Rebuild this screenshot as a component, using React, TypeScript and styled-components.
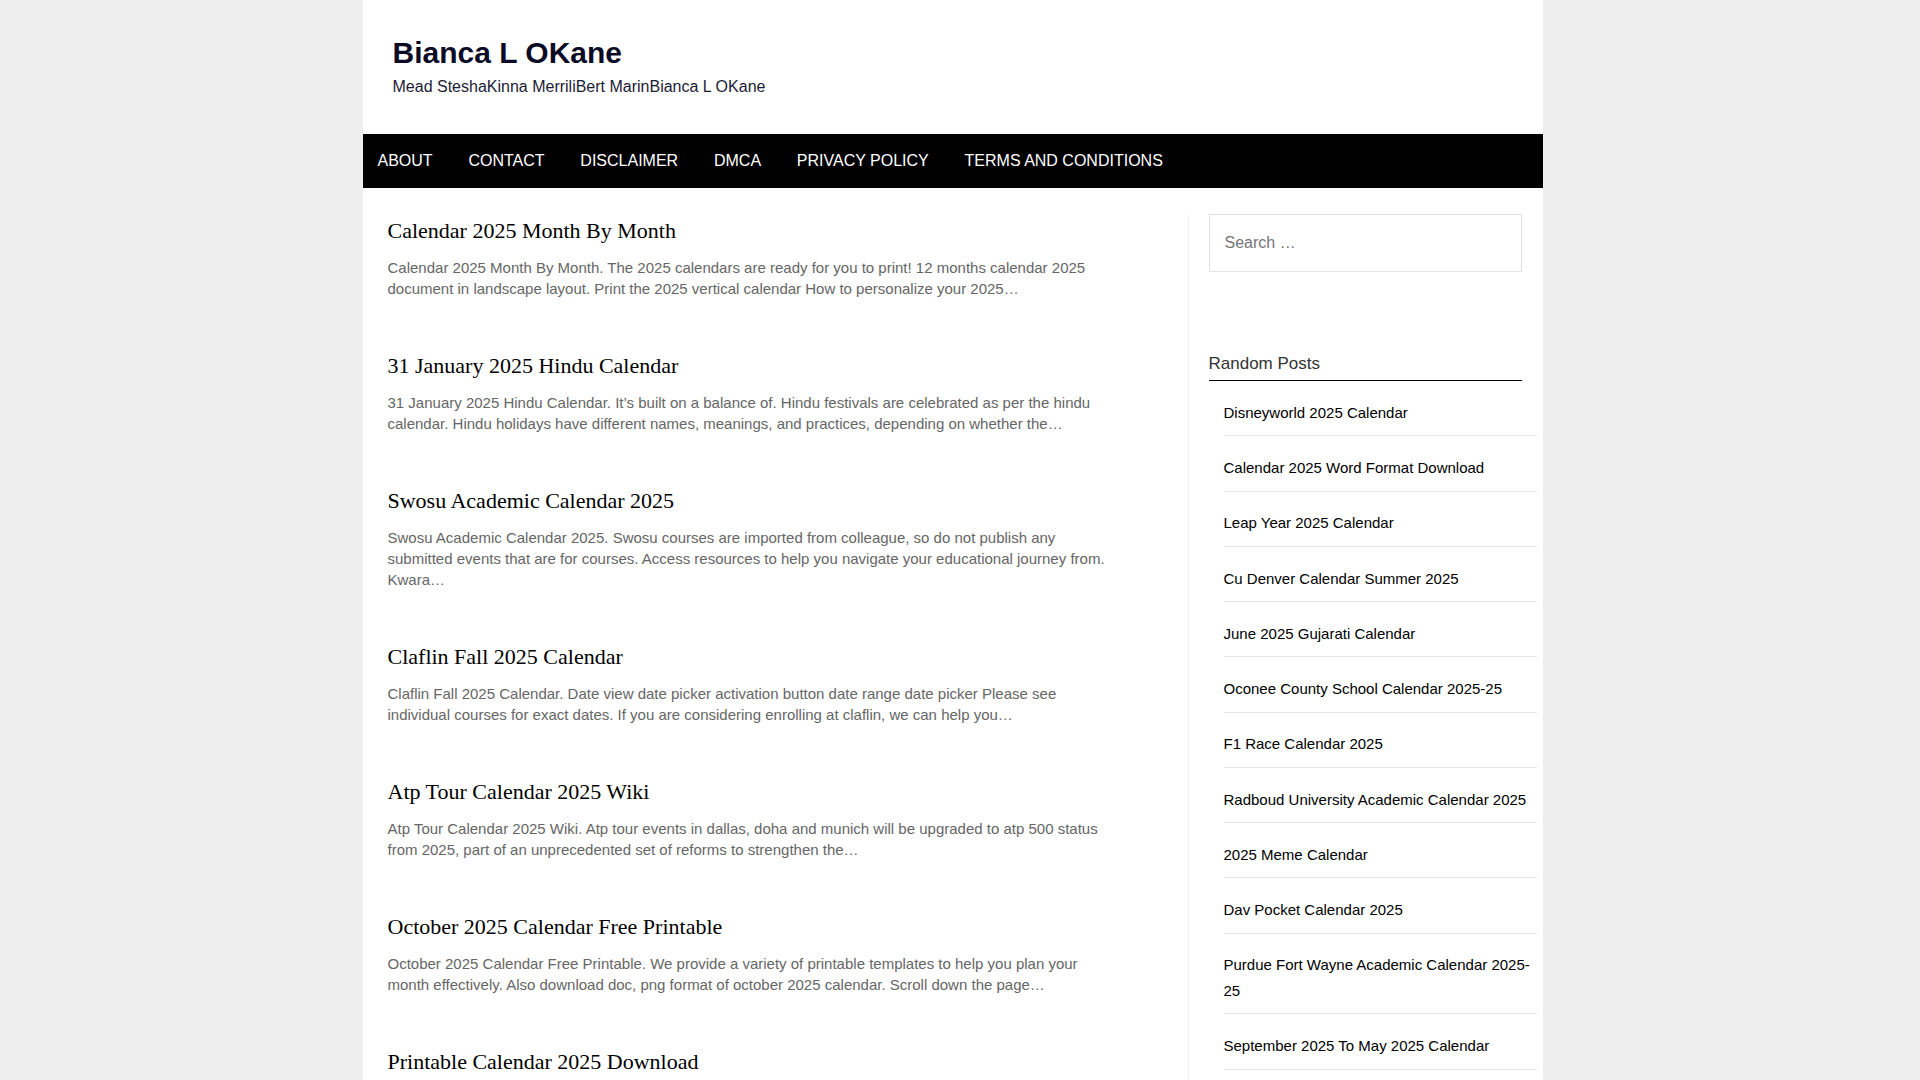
import React from "react";
import styled, { createGlobalStyle } from "styled-components";

const GlobalStyle = createGlobalStyle`
  html, body { margin: 0; padding: 0; }
  body {
    background: #eeeeee;
    font-family: "Liberation Sans", Arial, sans-serif;
    padding-right: 15px;
  }
  *, *::before, *::after { box-sizing: border-box; }
`;

const Page = styled.div`
  width: 1180px;
  margin: 0 auto;
  background: #ffffff;
`;

const Header = styled.header`
  padding: 35px 30px 35px;
`;

const SiteTitle = styled.h1`
  margin: 0;
  font-size: 30px;
  line-height: 36px;
  font-weight: 700;
  color: #0b0b26;
`;

const Tagline = styled.p`
  margin: 4px 0 0;
  font-size: 16px;
  line-height: 24px;
  color: #1c1c36;
`;

const NavBar = styled.nav`
  background: #000000;
  height: 54px;
  display: flex;
  align-items: center;
  gap: 35.8px;
  padding-left: 15px;
`;

const NavLink = styled.a`
  color: #ffffff;
  font-size: 16px;
  line-height: 54px;
  text-transform: uppercase;
  text-decoration: none;
`;

const ContentRow = styled.div`
  display: flex;
  align-items: stretch;
  padding: 26px 21px 0 25px;
`;

const Main = styled.main`
  flex: 1;
  padding-right: 74px;
  padding-bottom: 40px;
`;

const Post = styled.article`
  margin-bottom: 50.2px;
`;

const PostTitle = styled.h2`
  margin: 0 0 8.4px;
  font-family: "Liberation Serif", "Times New Roman", serif;
  font-size: 22px;
  line-height: 34.4px;
  font-weight: 400;
  color: #000000;
`;

const Excerpt = styled.p`
  margin: 0;
  font-size: 15px;
  line-height: 21px;
  color: #666666;
`;

const Sidebar = styled.aside`
  width: 334px;
  flex: none;
  border-left: 1px solid #eeeeee;
  padding-left: 20px;
`;

const SearchField = styled.input`
  display: block;
  width: 100%;
  height: 58px;
  border: 1px solid #e2e2e2;
  padding: 0 15px;
  font-family: "Liberation Sans", Arial, sans-serif;
  font-size: 16px;
  color: #333;
  background: #fff;
  outline: none;
  &::placeholder { color: #757575; }
`;

const Widget = styled.section`
  margin-top: 80px;
`;

const WidgetTitle = styled.h3`
  margin: 0;
  font-size: 17px;
  line-height: 24px;
  font-weight: 400;
  color: #333333;
  padding-bottom: 4px;
  border-bottom: 1px solid #000000;
`;

const PostList = styled.ul`
  list-style: none;
  margin: 0 0 0 15px;
  padding: 0;
  width: 313px;
`;

const PostItem = styled.li`
  padding: 18.75px 0 10px;
  border-bottom: 1px solid #e6e6e6;
  font-size: 15px;
  line-height: 25.5px;
`;

const ItemLink = styled.a`
  color: #000000;
  text-decoration: none;
`;

const Footer = styled.footer`
  border-top: 1px solid #eeeeee;
  padding: 30px 24px;
  font-size: 14px;
  line-height: 20px;
  color: #666666;
  text-align: center;
`;

const navItems = ["About", "Contact", "Disclaimer", "DMCA", "Privacy Policy", "Terms and Conditions"];

const posts = [
  {
    title: "Calendar 2025 Month By Month",
    text: "Calendar 2025 Month By Month. The 2025 calendars are ready for you to print! 12 months calendar 2025 document in landscape layout. Print the 2025 vertical calendar How to personalize your 2025…",
  },
  {
    title: "31 January 2025 Hindu Calendar",
    text: "31 January 2025 Hindu Calendar. It’s built on a balance of. Hindu festivals are celebrated as per the hindu calendar. Hindu holidays have different names, meanings, and practices, depending on whether the…",
  },
  {
    title: "Swosu Academic Calendar 2025",
    text: "Swosu Academic Calendar 2025. Swosu courses are imported from colleague, so do not publish any submitted events that are for courses. Access resources to help you navigate your educational journey from. Kwara…",
  },
  {
    title: "Claflin Fall 2025 Calendar",
    text: "Claflin Fall 2025 Calendar. Date view date picker activation button date range date picker Please see individual courses for exact dates. If you are considering enrolling at claflin, we can help you…",
  },
  {
    title: "Atp Tour Calendar 2025 Wiki",
    text: "Atp Tour Calendar 2025 Wiki. Atp tour events in dallas, doha and munich will be upgraded to atp 500 status from 2025, part of an unprecedented set of reforms to strengthen the…",
  },
  {
    title: "October 2025 Calendar Free Printable",
    text: "October 2025 Calendar Free Printable. We provide a variety of printable templates to help you plan your month effectively. Also download doc, png format of october 2025 calendar. Scroll down the page…",
  },
  {
    title: "Printable Calendar 2025 Download",
    text: "Printable Calendar 2025 Download. Free printable 2025 calendars in pdf, word and excel formats. Download the yearly and monthly calendar templates and print them at home for…",
  },
  {
    title: "Disneyworld 2025 Calendar",
    text: "Disneyworld 2025 Calendar. Plan your visit with the park calendar, showing park hours, special events and seasonal celebrations so you can pick the best days for your…",
  },
  {
    title: "Leap Year 2025 Calendar",
    text: "Leap Year 2025 Calendar. Find out whether 2025 is a leap year and view the full yearly calendar with holidays, week numbers and moon phases for every month of the…",
  },
  {
    title: "June 2025 Gujarati Calendar",
    text: "June 2025 Gujarati Calendar. View the gujarati panchang for june with tithi, nakshatra, festivals and auspicious days, and download the printable version of the…",
  },
];

const randomPosts = [
  "Disneyworld 2025 Calendar",
  "Calendar 2025 Word Format Download",
  "Leap Year 2025 Calendar",
  "Cu Denver Calendar Summer 2025",
  "June 2025 Gujarati Calendar",
  "Oconee County School Calendar 2025-25",
  "F1 Race Calendar 2025",
  "Radboud University Academic Calendar 2025",
  "2025 Meme Calendar",
  "Dav Pocket Calendar 2025",
  "Purdue Fort Wayne Academic Calendar 2025-25",
  "September 2025 To May 2025 Calendar",
];

export default function App() {
  return (
    <>
      <GlobalStyle />
      <Page>
        <Header>
          <SiteTitle>Bianca L OKane</SiteTitle>
          <Tagline>Mead SteshaKinna MerriliBert MarinBianca L OKane</Tagline>
        </Header>
        <NavBar>
          {navItems.map((item) => (
            <NavLink key={item} href="#">
              {item}
            </NavLink>
          ))}
        </NavBar>
        <ContentRow>
          <Main>
            {posts.map((p) => (
              <Post key={p.title}>
                <PostTitle>{p.title}</PostTitle>
                <Excerpt>{p.text}</Excerpt>
              </Post>
            ))}
          </Main>
          <Sidebar>
            <form onSubmit={(e) => e.preventDefault()}>
              <SearchField type="search" placeholder="Search …" />
            </form>
            <Widget>
              <WidgetTitle>Random Posts</WidgetTitle>
              <PostList>
                {randomPosts.map((r) => (
                  <PostItem key={r}>
                    <ItemLink href="#">{r}</ItemLink>
                  </PostItem>
                ))}
              </PostList>
            </Widget>
          </Sidebar>
        </ContentRow>
        <Footer>Copyright © 2025 Bianca L OKane</Footer>
      </Page>
    </>
  );
}
